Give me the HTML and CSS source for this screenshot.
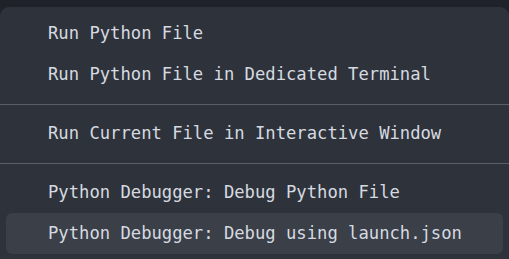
FILE: index.html
```html
<!DOCTYPE html>
<html lang="en">
  <head>
    <meta charset="UTF-8" />
    <meta name="viewport" content="width=device-width, initial-scale=1.0" />
    <title>Run menu</title>
    <link rel="stylesheet" href="styles.css">
  </head>
  <body>
    <div class="menu">
      <div class="item">Run Python File</div>
      <div class="item">Run Python File in Dedicated Terminal</div>
      <div class="sep"></div>
      <div class="item">Run Current File in Interactive Window</div>
      <div class="sep"></div>
      <div class="item">Python Debugger: Debug Python File</div>
      <div class="item active">Python Debugger: Debug using launch.json</div>
    </div>
  </body>
</html>
```

FILE: styles.css
```css
* {
  margin: 0;
  padding: 0;
  box-sizing: border-box;
}

body {
  background-color: #1f2329;
  padding-top: 7px;
  height: 259px;
  overflow: hidden;
  font-family: "DejaVu Sans Mono", monospace;
}

.menu {
  background-color: #2e333b;
  border-radius: 9px;
  padding: 6px 6px 6px;
  height: 260px;
}

.item {
  height: 41px;
  line-height: 41px;
  padding-left: 42px;
  font-size: 17.2px;
  color: #d6dae0;
  border-radius: 6px;
  white-space: nowrap;
}

.item.active {
  background-color: #3a3f48;
}

.sep {
  height: 1px;
  background-color: #5a5f67;
  margin: 9px -6px 8px;
}
```
